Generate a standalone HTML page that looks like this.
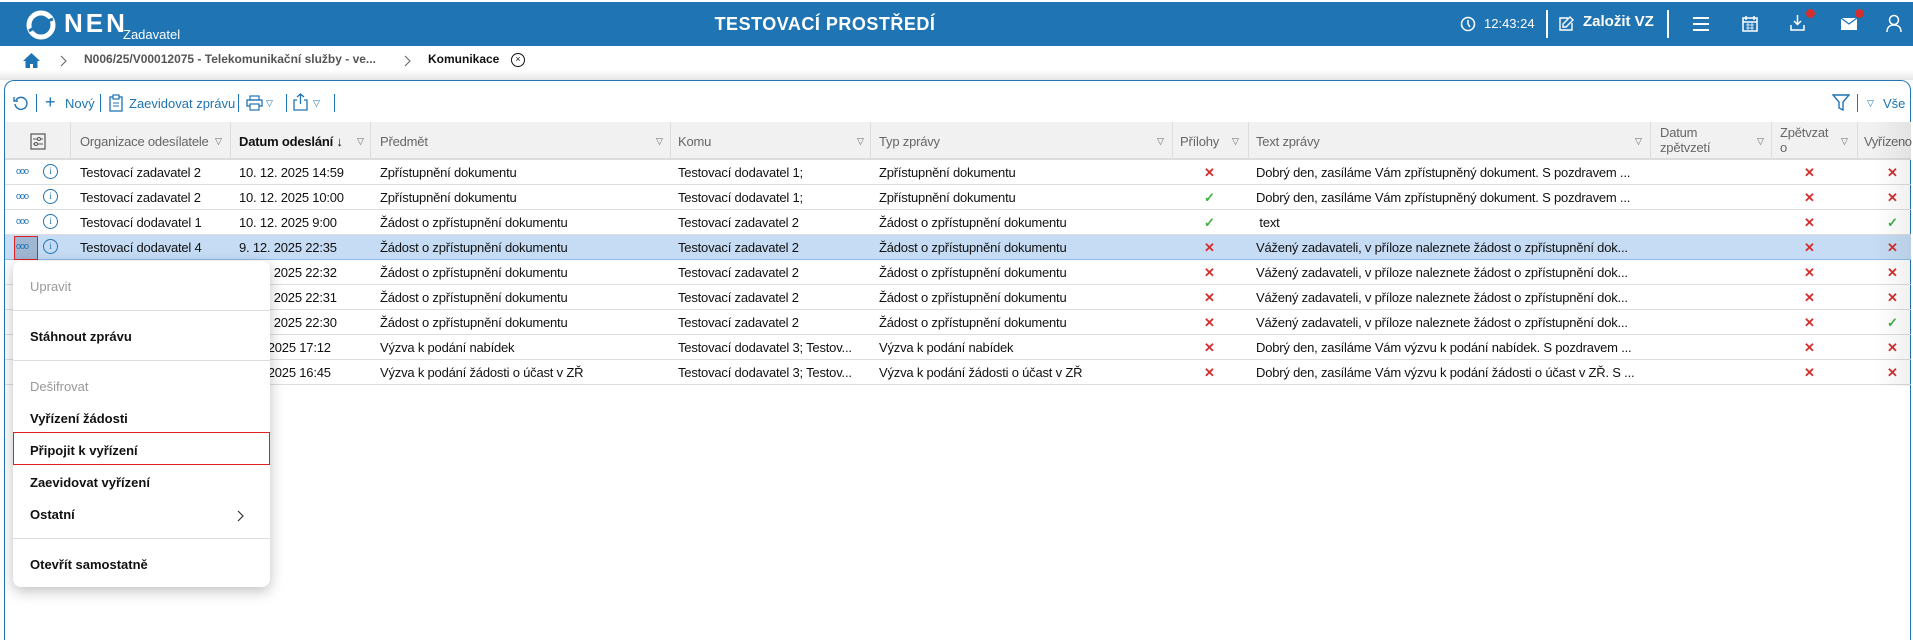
<!DOCTYPE html>
<html><head><meta charset="utf-8">
<style>
*{margin:0;padding:0;box-sizing:border-box}
body{width:1913px;height:617px;overflow:hidden;background:#fff;font-family:"Liberation Sans",sans-serif;font-size:13px;color:#111;position:relative}
.a{position:absolute;white-space:nowrap}
#hdr{position:absolute;left:0;top:2px;width:1913px;height:44px;background:#1f74b3;color:#fff}
#bc{position:absolute;left:0;top:46px;width:1913px;height:26px;background:#fff}
#shade{position:absolute;left:0;top:70px;width:1913px;height:10px;background:linear-gradient(#fff,#e6e6e6)}
#panel{position:absolute;left:4px;top:80px;width:1907px;height:560px;border:1.5px solid #1f74b3;border-bottom:none;border-radius:10px 10px 0 0;background:#fff}
.tb{color:#1f74b3;font-size:13px}
.sep{position:absolute;width:1px;height:18px;background:#1f74b3;top:94px}
#th{position:absolute;left:5px;top:122px;width:1906px;height:38px;background:#f1f1f1;border-bottom:2px solid #ddd;letter-spacing:-0.2px}
.hc{position:absolute;top:0;height:38px;border-left:1px solid #ddd}
.ht{position:absolute;color:#666;font-size:13px;white-space:nowrap}
.tri{position:absolute;color:#666;font-size:9px;top:14px}
.row{position:absolute;left:5px;width:1906px;height:25px;border-bottom:1px solid #ddd;letter-spacing:-0.2px}
.row span{position:absolute;top:5px;white-space:nowrap}
.x{color:#d32f2f;font-weight:bold;font-size:13px}
.ok{color:#3cb043;font-weight:bold;font-size:13px}
.c1{left:75px}.c2{left:234px}.c3{left:375px}.c4{left:673px}.c5{left:874px}.c7{left:1251px}
.m1{left:1199px}.m2{left:1799px}.m3{left:1882px}
.dots{left:11px!important;top:6px!important;color:#1f74b3;font-size:9px;letter-spacing:-1px}
.inf{left:38px!important;top:4px!important;width:15px;height:15px;border:1.3px solid #1f74b3;border-radius:50%;color:#1f74b3;font-size:9px;text-align:center;line-height:13px;font-family:"Liberation Serif",serif}
#menu{position:absolute;left:13px;top:261px;width:257px;height:326px;background:#fff;border-radius:8px;box-shadow:0 4px 14px rgba(0,0,0,.25)}
.mi{position:absolute;left:17px;font-weight:bold;font-size:13px;color:#111}
.md{position:absolute;left:0;width:257px;height:1px;background:#ddd}
</style></head><body>
<div id="hdr">
 <svg class="a" style="left:25px;top:7px" width="32" height="32" viewBox="0 0 32 32"><circle cx="16" cy="16" r="12" fill="none" stroke="#fff" stroke-width="5"/><path d="M4 22 Q16 14 28 10" stroke="#1f74b3" stroke-width="3" fill="none"/></svg>
 <div class="a" style="left:64px;top:6px;font-size:26px;font-weight:bold;letter-spacing:3px">NEN</div>
 <div class="a" style="left:123px;top:25px;font-size:13px">Zadavatel</div>
 <div class="a" style="left:0;width:1650px;text-align:center;top:12px;font-size:18px;font-weight:bold;letter-spacing:.5px">TESTOVACÍ PROSTŘEDÍ</div>
 <svg class="a" style="left:1460px;top:14px" width="16" height="16"><circle cx="8" cy="8" r="6.5" fill="none" stroke="#fff" stroke-width="1.5"/><path d="M8 4v4l2 3" stroke="#fff" stroke-width="1.5" fill="none"/></svg>
 <div class="a" style="left:1484px;top:14px;font-size:13px">12:43:24</div>
 <div class="a" style="left:1546px;top:8px;width:2px;height:28px;background:#fff"></div>
 <svg class="a" style="left:1558px;top:13px" width="17" height="17"><path d="M12 2l3 3-7 7H5V9z M10 3H2v12h12V8" stroke="#fff" stroke-width="1.4" fill="none"/></svg>
 <div class="a" style="left:1583px;top:11px;font-size:15px;font-weight:bold">Založit VZ</div>
 <div class="a" style="left:1667px;top:8px;width:2px;height:28px;background:#fff"></div>
 <svg class="a" style="left:1692px;top:14px" width="18" height="16"><path d="M1 2h16M1 8h16M1 14h16" stroke="#fff" stroke-width="2"/></svg>
 <svg class="a" style="left:1742px;top:13px" width="16" height="17"><rect x="1" y="3" width="14" height="13" fill="none" stroke="#fff" stroke-width="1.5"/><path d="M4 1v4M12 1v4M1 7h14" stroke="#fff" stroke-width="1.5"/><path d="M4 10h8M4 13h8M6 8v7M10 8v7" stroke="#fff" stroke-width=".8"/></svg>
 <svg class="a" style="left:1789px;top:12px" width="17" height="18"><path d="M8.5 1v9M5 7l3.5 3.5L12 7M2 11v5h13v-5" stroke="#fff" stroke-width="1.5" fill="none"/></svg>
 <div class="a" style="left:1806px;top:7px;width:9px;height:9px;border-radius:50%;background:#d32f2f"></div>
 <svg class="a" style="left:1840px;top:15px" width="18" height="14"><rect x="1" y="1" width="16" height="12" fill="#fff"/><path d="M1 1l8 6 8-6" stroke="#1f74b3" stroke-width="1.2" fill="none"/></svg>
 <div class="a" style="left:1855px;top:7px;width:9px;height:9px;border-radius:50%;background:#d32f2f"></div>
 <svg class="a" style="left:1886px;top:12px" width="16" height="19"><circle cx="8" cy="6" r="4.5" fill="none" stroke="#fff" stroke-width="1.5"/><path d="M1 18c0-5 3-7 7-7s7 2 7 7" fill="none" stroke="#fff" stroke-width="1.5"/></svg>
</div>
<div id="bc">
 <svg class="a" style="left:23px;top:7px" width="17" height="15"><path d="M8.5 0L0 8h2.5v7h4.5v-4h3v4h4.5V8H17z" fill="#1f74b3"/></svg>
 <svg class="a" style="left:60px;top:9px" width="8" height="12"><path d="M1 1l5 5-5 5" fill="none" stroke="#666" stroke-width="1.1"/></svg>
 <div class="a" style="left:84px;top:6px;color:#555;font-size:12px;font-weight:bold">N006/25/V00012075 - Telekomunikační služby - ve...</div>
 <svg class="a" style="left:404px;top:9px" width="8" height="12"><path d="M1 1l5 5-5 5" fill="none" stroke="#666" stroke-width="1.1"/></svg>
 <div class="a" style="left:428px;top:6px;font-size:12px;font-weight:bold">Komunikace</div>
 <div class="a" style="left:511px;top:7px;width:14px;height:14px;border:1.3px solid #111;border-radius:50%;font-size:9px;text-align:center;line-height:11px">×</div>
</div>
<div id="shade"></div>
<div id="panel"></div>
<svg class="a" style="left:13px;top:95px" width="16" height="16"><path d="M3 5a6 6 0 1 1-1 4" fill="none" stroke="#1f74b3" stroke-width="1.4"/><path d="M1 2v4h4" fill="none" stroke="#1f74b3" stroke-width="1.4"/></svg>
<div class="sep" style="left:36px"></div>
<div class="a tb" style="left:45px;top:94px;font-size:18px;line-height:16px">+</div>
<div class="a tb" style="left:65px;top:96px">Nový</div>
<div class="sep" style="left:100px"></div>
<svg class="a" style="left:109px;top:94px" width="14" height="18"><rect x="1" y="3" width="12" height="14" fill="none" stroke="#1f74b3" stroke-width="1.3"/><rect x="4" y="1" width="6" height="4" fill="#fff" stroke="#1f74b3" stroke-width="1.2"/><path d="M4 9h6M4 12h6" stroke="#1f74b3"/></svg>
<div class="a tb" style="left:129px;top:96px">Zaevidovat zprávu</div>
<div class="sep" style="left:238px"></div>
<svg class="a" style="left:246px;top:95px" width="17" height="16"><rect x="4" y="1" width="9" height="4" fill="none" stroke="#1f74b3" stroke-width="1.2"/><rect x="1" y="5" width="15" height="6" fill="none" stroke="#1f74b3" stroke-width="1.3"/><rect x="4" y="9" width="9" height="6" fill="#fff" stroke="#1f74b3" stroke-width="1.2"/></svg>
<div class="a tb" style="left:266px;top:98px;font-size:9px">▽</div>
<div class="sep" style="left:286px"></div>
<svg class="a" style="left:293px;top:93px" width="15" height="18"><path d="M7.5 1v10M4 4l3.5-3 3.5 3M4 7H1v10h13V7h-3" fill="none" stroke="#1f74b3" stroke-width="1.3"/></svg>
<div class="a tb" style="left:313px;top:98px;font-size:9px">▽</div>
<div class="sep" style="left:334px"></div>
<svg class="a" style="left:1832px;top:93px" width="18" height="18"><path d="M1 2h16l-6 7v8l-4-2V9z" fill="none" stroke="#1f74b3" stroke-width="1.4"/></svg>
<div class="sep" style="left:1857px"></div>
<div class="a tb" style="left:1867px;top:98px;font-size:9px">▽</div>
<div class="a tb" style="left:1883px;top:96px">Vše</div>

<div id="th">
 <svg class="a" style="left:25px;top:11px" width="16" height="17"><rect x="1" y="1" width="14" height="15" fill="none" stroke="#555" stroke-width="1.2"/><path d="M3 6h10M3 11h10" stroke="#555"/><circle cx="9" cy="6" r="1.5" fill="#fff" stroke="#555"/><circle cx="6" cy="11" r="1.5" fill="#fff" stroke="#555"/></svg>
 <div class="hc" style="left:65px"></div><div class="ht" style="left:75px;top:12px">Organizace odesílatele</div><div class="tri" style="left:210px">▽</div>
 <div class="hc" style="left:225px"></div><div class="ht" style="left:234px;top:12px;color:#111;font-weight:bold">Datum odeslání <span style="font-weight:normal">↓</span></div><div class="tri" style="left:352px">▽</div>
 <div class="hc" style="left:365px"></div><div class="ht" style="left:375px;top:12px">Předmět</div><div class="tri" style="left:651px">▽</div>
 <div class="hc" style="left:665px"></div><div class="ht" style="left:673px;top:12px">Komu</div><div class="tri" style="left:852px">▽</div>
 <div class="hc" style="left:865px"></div><div class="ht" style="left:874px;top:12px">Typ zprávy</div><div class="tri" style="left:1152px">▽</div>
 <div class="hc" style="left:1167px"></div><div class="ht" style="left:1175px;top:12px">Přílohy</div><div class="tri" style="left:1227px">▽</div>
 <div class="hc" style="left:1243px"></div><div class="ht" style="left:1251px;top:12px">Text zprávy</div><div class="tri" style="left:1630px">▽</div>
 <div class="hc" style="left:1645px"></div><div class="ht" style="left:1655px;top:3px;line-height:15px">Datum<br>zpětvzetí</div><div class="tri" style="left:1752px">▽</div>
 <div class="hc" style="left:1766px"></div><div class="ht" style="left:1775px;top:3px;line-height:15px">Zpětvzat<br>o</div><div class="tri" style="left:1836px">▽</div>
 <div class="hc" style="left:1852px"></div><div class="ht" style="left:1859px;top:12px;letter-spacing:-0.4px">Vyřízeno</div>
</div>

<div class="row" style="top:160px"><span class="dots">ooo</span><span class="inf">i</span><span class="c1">Testovací zadavatel 2</span><span class="c2">10. 12. 2025 14:59</span><span class="c3">Zpřístupnění dokumentu</span><span class="c4">Testovací dodavatel 1;</span><span class="c5">Zpřístupnění dokumentu</span><span class="m1 x">✕</span><span class="c7">Dobrý den, zasíláme Vám zpřístupněný dokument. S pozdravem ...</span><span class="m2 x">✕</span><span class="m3 x">✕</span></div>
<div class="row" style="top:185px"><span class="dots">ooo</span><span class="inf">i</span><span class="c1">Testovací zadavatel 2</span><span class="c2">10. 12. 2025 10:00</span><span class="c3">Zpřístupnění dokumentu</span><span class="c4">Testovací dodavatel 1;</span><span class="c5">Zpřístupnění dokumentu</span><span class="m1 ok">✓</span><span class="c7">Dobrý den, zasíláme Vám zpřístupněný dokument. S pozdravem ...</span><span class="m2 x">✕</span><span class="m3 x">✕</span></div>
<div class="row" style="top:210px"><span class="dots">ooo</span><span class="inf">i</span><span class="c1">Testovací dodavatel 1</span><span class="c2">10. 12. 2025 9:00</span><span class="c3">Žádost o zpřístupnění dokumentu</span><span class="c4">Testovací zadavatel 2</span><span class="c5">Žádost o zpřístupnění dokumentu</span><span class="m1 ok">✓</span><span class="c7">&nbsp;text</span><span class="m2 x">✕</span><span class="m3 ok">✓</span></div>
<div class="row" style="top:235px;background:#c5dcf4;border-bottom:1px solid #90bdea"><span style="left:9px;top:1px;width:24px;height:24px;background:#9fb7d3;border:1.3px solid #e02020"></span><span class="dots">ooo</span><span class="inf">i</span><span class="c1">Testovací dodavatel 4</span><span class="c2">9. 12. 2025 22:35</span><span class="c3">Žádost o zpřístupnění dokumentu</span><span class="c4">Testovací zadavatel 2</span><span class="c5">Žádost o zpřístupnění dokumentu</span><span class="m1 x">✕</span><span class="c7">Vážený zadavateli, v příloze naleznete žádost o zpřístupnění dok...</span><span class="m2 x">✕</span><span class="m3 x">✕</span></div>
<div class="row" style="top:260px"><span class="c2">9. 12. 2025 22:32</span><span class="c3">Žádost o zpřístupnění dokumentu</span><span class="c4">Testovací zadavatel 2</span><span class="c5">Žádost o zpřístupnění dokumentu</span><span class="m1 x">✕</span><span class="c7">Vážený zadavateli, v příloze naleznete žádost o zpřístupnění dok...</span><span class="m2 x">✕</span><span class="m3 x">✕</span></div>
<div class="row" style="top:285px"><span class="c2">9. 12. 2025 22:31</span><span class="c3">Žádost o zpřístupnění dokumentu</span><span class="c4">Testovací zadavatel 2</span><span class="c5">Žádost o zpřístupnění dokumentu</span><span class="m1 x">✕</span><span class="c7">Vážený zadavateli, v příloze naleznete žádost o zpřístupnění dok...</span><span class="m2 x">✕</span><span class="m3 x">✕</span></div>
<div class="row" style="top:310px"><span class="c2">9. 12. 2025 22:30</span><span class="c3">Žádost o zpřístupnění dokumentu</span><span class="c4">Testovací zadavatel 2</span><span class="c5">Žádost o zpřístupnění dokumentu</span><span class="m1 x">✕</span><span class="c7">Vážený zadavateli, v příloze naleznete žádost o zpřístupnění dok...</span><span class="m2 x">✕</span><span class="m3 ok">✓</span></div>
<div class="row" style="top:335px"><span style="left:228px">8. 12. 2025 17:12</span><span class="c3">Výzva k podání nabídek</span><span class="c4">Testovací dodavatel 3; Testov...</span><span class="c5">Výzva k podání nabídek</span><span class="m1 x">✕</span><span class="c7">Dobrý den, zasíláme Vám výzvu k podání nabídek. S pozdravem ...</span><span class="m2 x">✕</span><span class="m3 x">✕</span></div>
<div class="row" style="top:360px"><span style="left:228px">8. 12. 2025 16:45</span><span class="c3">Výzva k podání žádosti o účast v ZŘ</span><span class="c4">Testovací dodavatel 3; Testov...</span><span class="c5">Výzva k podání žádosti o účast v ZŘ</span><span class="m1 x">✕</span><span class="c7">Dobrý den, zasíláme Vám výzvu k podání žádosti o účast v ZŘ. S ...</span><span class="m2 x">✕</span><span class="m3 x">✕</span></div>
<div class="a" style="left:1873px;top:122px;width:38px;height:264px;background:linear-gradient(90deg,rgba(0,0,0,0),rgba(0,0,0,.06))"></div>

<div id="menu">
 <div class="mi" style="top:18px;color:#999;font-weight:normal">Upravit</div>
 <div class="md" style="top:49px"></div>
 <div class="mi" style="top:68px">Stáhnout zprávu</div>
 <div class="md" style="top:99px"></div>
 <div class="mi" style="top:118px;color:#999;font-weight:normal">Dešifrovat</div>
 <div class="mi" style="top:150px">Vyřízení žádosti</div>
 <div class="a" style="left:0;top:171px;width:257px;height:33px;border:1.3px solid #e02020"></div>
 <div class="mi" style="top:182px">Připojit k vyřízení</div>
 <div class="mi" style="top:214px">Zaevidovat vyřízení</div>
 <div class="mi" style="top:246px">Ostatní</div>
 <svg class="a" style="left:224px;top:249px" width="8" height="12"><path d="M1 1l5 5-5 5" fill="none" stroke="#333" stroke-width="1.2"/></svg>
 <div class="md" style="top:277px"></div>
 <div class="mi" style="top:296px">Otevřít samostatně</div>
</div>
</body></html>
